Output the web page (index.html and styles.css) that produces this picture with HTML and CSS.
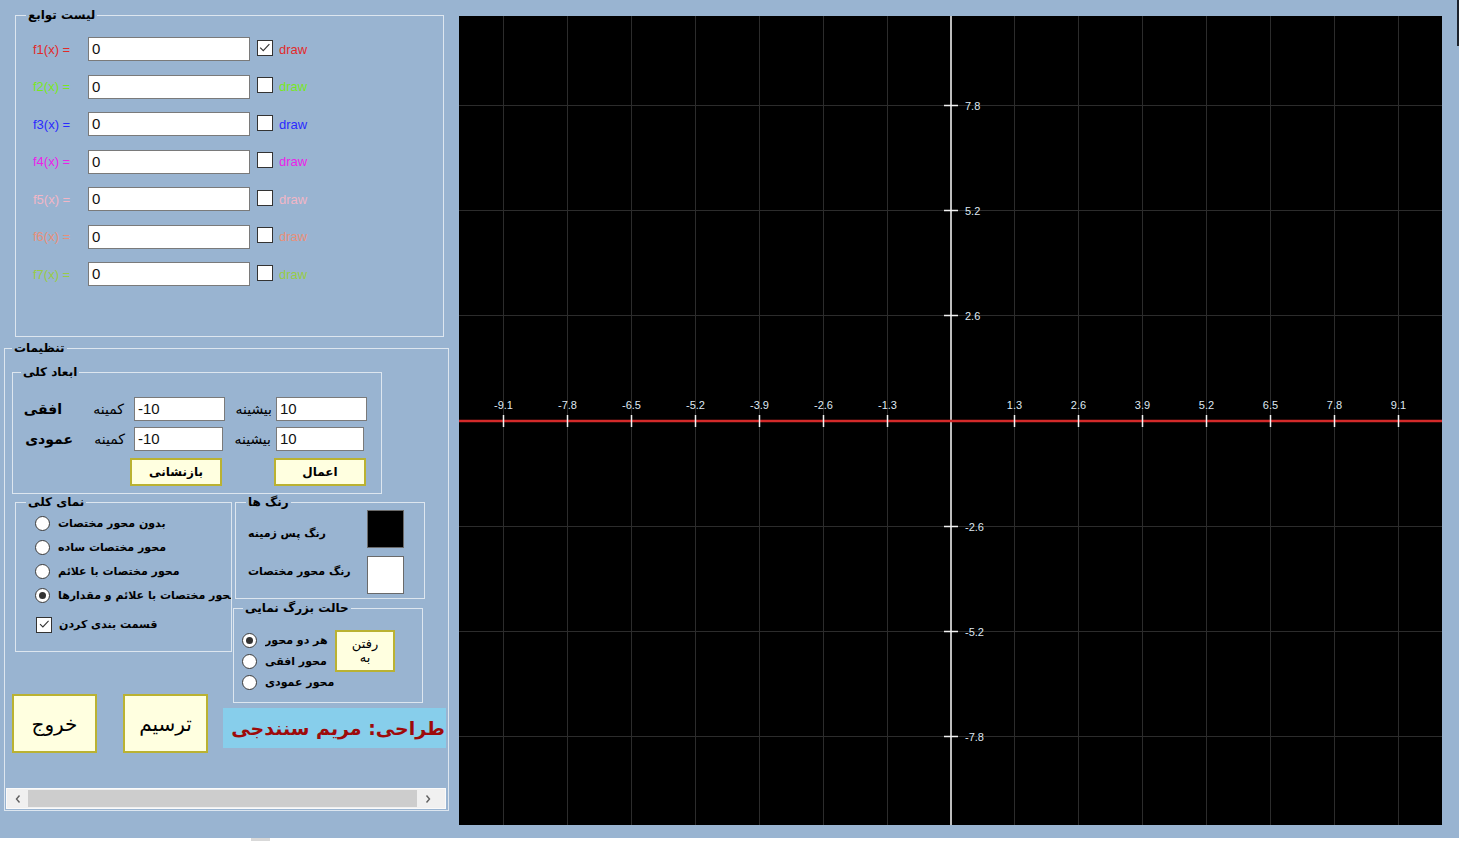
FILE: index.html
```html
<!DOCTYPE html>
<html lang="fa">
<head>
<meta charset="utf-8">
<title>رسم توابع</title>
<link rel="stylesheet" href="styles.css">
</head>
<body>
<div class="app">
  <div class="left">
    <div class="group g-funcs">
      <span class="gtitle">لیست توابع</span>
      <div class="funcs">
        <div class="frow c1"><span class="flabel">f1(x) =</span><span class="tbox">0</span><span class="cb"><svg viewBox="0 0 16 16" width="14" height="14"><polyline points="2.5,7.5 6,11 13,3.5" fill="none" stroke="#333" stroke-width="1.3"/></svg></span><span class="draw">draw</span></div>
        <div class="frow c2"><span class="flabel">f2(x) =</span><span class="tbox">0</span><span class="cb"></span><span class="draw">draw</span></div>
        <div class="frow c3"><span class="flabel">f3(x) =</span><span class="tbox">0</span><span class="cb"></span><span class="draw">draw</span></div>
        <div class="frow c4"><span class="flabel">f4(x) =</span><span class="tbox">0</span><span class="cb"></span><span class="draw">draw</span></div>
        <div class="frow c5"><span class="flabel">f5(x) =</span><span class="tbox">0</span><span class="cb"></span><span class="draw">draw</span></div>
        <div class="frow c6"><span class="flabel">f6(x) =</span><span class="tbox">0</span><span class="cb"></span><span class="draw">draw</span></div>
        <div class="frow c7"><span class="flabel">f7(x) =</span><span class="tbox">0</span><span class="cb"></span><span class="draw">draw</span></div>
      </div>
    </div>

    <div class="group g-settings">
      <span class="gtitle t-settings">تنظیمات</span>

      <div class="group g-dims">
        <span class="gtitle t-dims">ابعاد کلی</span>
        <div class="drow r1">
          <span class="dl big w1">افقی</span>
          <span class="dl w2">کمینه</span>
          <span class="tbox dbox wa">-10</span>
          <span class="dl w4">بیشینه</span>
          <span class="tbox dbox wa">10</span>
        </div>
        <div class="drow r2">
          <span class="dl big w1b">عمودی</span>
          <span class="dl w2b">کمینه</span>
          <span class="tbox dbox wb">-10</span>
          <span class="dl w4b">بیشینه</span>
          <span class="tbox dbox wc">10</span>
        </div>
        <div class="dbtns">
          <span class="btn small">بازنشانی</span>
          <span class="btn small">اعمال</span>
        </div>
      </div>

      <div class="mid">
        <div class="col-l">
          <div class="group g-view">
            <span class="gtitle t-view">نمای کلی</span>
            <div class="vrow"><span class="radio"></span><span class="rtext">بدون محور مختصات</span></div>
            <div class="vrow"><span class="radio"></span><span class="rtext">محور مختصات ساده</span></div>
            <div class="vrow"><span class="radio"></span><span class="rtext">محور مختصات با علائم</span></div>
            <div class="vrow"><span class="radio on"></span><span class="rtext">محور مختصات با علائم و مقدارها</span></div>
            <div class="vrow crow"><span class="cb cb-sm"><svg viewBox="0 0 16 16" width="13" height="13"><polyline points="2.5,7.5 6,11 13,3.5" fill="none" stroke="#333" stroke-width="1.3"/></svg></span><span class="rtext">قسمت بندی کردن</span></div>
          </div>
          <div class="bigbtns">
            <span class="btn big">خروج</span>
            <span class="btn big">ترسیم</span>
          </div>
        </div>
        <div class="col-r">
          <div class="group g-colors">
            <span class="gtitle t-colors">رنگ ها</span>
            <span class="clabel l1">رنگ پس زمینه</span><span class="swatch black"></span>
            <span class="clabel l2">رنگ محور مختصات</span><span class="swatch white"></span>
          </div>
          <div class="group g-zoom">
            <span class="gtitle t-zoom">حالت بزرگ نمایی</span>
            <div class="zrow"><span class="radio on"></span><span class="rtext">هر دو محور</span></div>
            <span class="btn go">رفتن<br>به</span>
            <div class="zrow"><span class="radio"></span><span class="rtext">محور افقی</span></div>
            <div class="zrow"><span class="radio"></span><span class="rtext">محور عمودی</span></div>
          </div>
          <div class="credit">طراحی: مریم سنندجی</div>
        </div>
      </div>

      <div class="hscroll">
        <span class="arrow"><svg width="8" height="10" viewBox="0 0 8 10"><polyline points="5.5,1.5 2.5,5 5.5,8.5" fill="none" stroke="#606060" stroke-width="1.4"/></svg></span>
        <span class="thumb"></span>
        <span class="arrow"><svg width="8" height="10" viewBox="0 0 8 10"><polyline points="2.5,1.5 5.5,5 2.5,8.5" fill="none" stroke="#606060" stroke-width="1.4"/></svg></span>
      </div>
    </div>
  </div>

  <div class="graph">
    <svg width="983" height="809" viewBox="0 0 983 809">
      <rect width="983" height="809" fill="#000"/>
      <g stroke="#2c2c2c" stroke-width="1">
        <line x1="44.5" y1="0" x2="44.5" y2="809"/>
        <line x1="108.5" y1="0" x2="108.5" y2="809"/>
        <line x1="172.5" y1="0" x2="172.5" y2="809"/>
        <line x1="236.5" y1="0" x2="236.5" y2="809"/>
        <line x1="300.5" y1="0" x2="300.5" y2="809"/>
        <line x1="364.5" y1="0" x2="364.5" y2="809"/>
        <line x1="428.5" y1="0" x2="428.5" y2="809"/>
        <line x1="555.5" y1="0" x2="555.5" y2="809"/>
        <line x1="619.5" y1="0" x2="619.5" y2="809"/>
        <line x1="683.5" y1="0" x2="683.5" y2="809"/>
        <line x1="747.5" y1="0" x2="747.5" y2="809"/>
        <line x1="811.5" y1="0" x2="811.5" y2="809"/>
        <line x1="875.5" y1="0" x2="875.5" y2="809"/>
        <line x1="939.5" y1="0" x2="939.5" y2="809"/>
        <line x1="0" y1="89.5" x2="983" y2="89.5"/>
        <line x1="0" y1="194.5" x2="983" y2="194.5"/>
        <line x1="0" y1="299.5" x2="983" y2="299.5"/>
        <line x1="0" y1="510.5" x2="983" y2="510.5"/>
        <line x1="0" y1="615.5" x2="983" y2="615.5"/>
        <line x1="0" y1="720.5" x2="983" y2="720.5"/>
      </g>
      <line x1="492" y1="0" x2="492" y2="809" stroke="#bdbdbd" stroke-width="2"/>
      <line x1="0" y1="405" x2="983" y2="405" stroke="#d42a2a" stroke-width="2.6"/>
      <g stroke="#f2f2f2" stroke-width="1.5">
        <line x1="44.5" y1="399" x2="44.5" y2="411"/>
        <line x1="108.5" y1="399" x2="108.5" y2="411"/>
        <line x1="172.5" y1="399" x2="172.5" y2="411"/>
        <line x1="236.5" y1="399" x2="236.5" y2="411"/>
        <line x1="300.5" y1="399" x2="300.5" y2="411"/>
        <line x1="364.5" y1="399" x2="364.5" y2="411"/>
        <line x1="428.5" y1="399" x2="428.5" y2="411"/>
        <line x1="555.5" y1="399" x2="555.5" y2="411"/>
        <line x1="619.5" y1="399" x2="619.5" y2="411"/>
        <line x1="683.5" y1="399" x2="683.5" y2="411"/>
        <line x1="747.5" y1="399" x2="747.5" y2="411"/>
        <line x1="811.5" y1="399" x2="811.5" y2="411"/>
        <line x1="875.5" y1="399" x2="875.5" y2="411"/>
        <line x1="939.5" y1="399" x2="939.5" y2="411"/>
        <line x1="485" y1="89.5" x2="499" y2="89.5"/>
        <line x1="485" y1="194.5" x2="499" y2="194.5"/>
        <line x1="485" y1="299.5" x2="499" y2="299.5"/>
        <line x1="485" y1="510.5" x2="499" y2="510.5"/>
        <line x1="485" y1="615.5" x2="499" y2="615.5"/>
        <line x1="485" y1="720.5" x2="499" y2="720.5"/>
      </g>
      <g class="axlabels" text-anchor="middle">
        <text x="44.5" y="393">-9.1</text>
        <text x="108.5" y="393">-7.8</text>
        <text x="172.5" y="393">-6.5</text>
        <text x="236.5" y="393">-5.2</text>
        <text x="300.5" y="393">-3.9</text>
        <text x="364.5" y="393">-2.6</text>
        <text x="428.5" y="393">-1.3</text>
        <text x="555.5" y="393">1.3</text>
        <text x="619.5" y="393">2.6</text>
        <text x="683.5" y="393">3.9</text>
        <text x="747.5" y="393">5.2</text>
        <text x="811.5" y="393">6.5</text>
        <text x="875.5" y="393">7.8</text>
        <text x="939.5" y="393">9.1</text>
      </g>
      <g class="axlabels">
        <text x="506" y="93.5">7.8</text>
        <text x="506" y="198.5">5.2</text>
        <text x="506" y="303.5">2.6</text>
        <text x="506" y="514.5">-2.6</text>
        <text x="506" y="619.5">-5.2</text>
        <text x="506" y="724.5">-7.8</text>
      </g>
    </svg>
  </div>
  <div class="edge"></div>
</div>
<div class="bottom-strip"><span class="blk"></span></div>
</body>
</html>
```

FILE: styles.css
```css
* { box-sizing: border-box; }
html, body { margin: 0; padding: 0; background: #ffffff; }
body { font-family: "Liberation Sans", Arial, sans-serif; color: #000; }

.app {
  width: 1459px;
  height: 838px;
  background: #99b4d1;
  display: flex;
  align-items: flex-start;
  overflow: hidden;
}

.left {
  width: 459px;
  flex: 0 0 459px;
  padding-top: 15px;
}

.group {
  position: relative;
  border: 1px solid #dde6ef;
}
.gtitle {
  position: absolute;
  top: -8px;
  height: 14px;
  line-height: 14px;
  padding: 0 2px;
  background: #99b4d1;
  font-family: "DejaVu Sans", sans-serif;
  font-weight: bold;
  font-size: 12px;
  white-space: nowrap;
  direction: rtl;
}

/* function list */
.g-funcs {
  margin-left: 15px;
  width: 429px;
  height: 322px;
  padding-top: 21px;
}
.g-funcs .gtitle { left: 10px; }
.funcs {
  display: grid;
  row-gap: 13.5px;
  padding-left: 17px;
}
.frow {
  display: flex;
  align-items: center;
  height: 24px;
  font-size: 13px;
}
.flabel { width: 55px; white-space: nowrap; }
.tbox {
  display: block;
  width: 162px;
  height: 24px;
  border: 1px solid #7a7a7a;
  background: #fff;
  font-family: "Liberation Sans", Arial, sans-serif;
  font-size: 15px;
  line-height: 22px;
  padding-left: 3px;
  color: #111;
}
.cb {
  width: 16px;
  height: 16px;
  margin-left: 7px;
  margin-top: -3px;
  border: 1px solid #333;
  background: #fff;
  display: flex;
  align-items: center;
  justify-content: center;
}
.draw { margin-left: 6px; }
.c1 { color: #e22a2a; }
.c2 { color: #78e81e; }
.c3 { color: #2a2aff; }
.c4 { color: #ea22ea; }
.c5 { color: #f2b6c6; }
.c6 { color: #e8907a; }
.c7 { color: #98cc46; }

/* settings */
.g-settings {
  margin-top: 11px;
  margin-left: 4px;
  width: 445px;
  height: 463px;
}
.t-settings { left: 7px; }

.g-dims {
  margin: 23px 0 0 7px;
  width: 370px;
  height: 122px;
  padding-top: 24px;
  font-family: "DejaVu Sans", sans-serif;
}
.t-dims { left: 8px; }
.drow {
  display: flex;
  align-items: center;
  height: 24px;
}
.r2 { margin-top: 6px; }
.dl {
  display: block;
  text-align: right;
  direction: rtl;
  font-size: 14px;
  white-space: nowrap;
}
.dl.big { font-weight: bold; font-size: 14px; }
.w1 { width: 53px; padding-right: 4px; }
.w2 { width: 68px; padding-right: 10px; }
.w4 { width: 51px; padding-right: 4px; }
.w1b { width: 64px; padding-right: 4px; }
.w2b { width: 57px; padding-right: 9px; }
.w4b { width: 53px; padding-right: 5px; }
.dbox { width: 91px; }
.dbox.wb { width: 89px; }
.dbox.wc { width: 88px; }
.dbtns {
  display: flex;
  gap: 52px;
  margin-top: 7px;
  padding-left: 117px;
}

.btn {
  display: flex;
  align-items: center;
  justify-content: center;
  background: #ffffe0;
  border: 2px solid #bab232;
  font-family: "DejaVu Sans", sans-serif;
  direction: rtl;
  text-align: center;
  white-space: nowrap;
}
.btn.small { width: 92px; height: 28px; font-size: 12px; font-weight: bold; }
.btn.big { width: 85px; height: 59px; font-size: 20px; }

.mid {
  display: flex;
  align-items: flex-start;
  margin-top: 8px;
}
.col-l { width: 226px; flex: 0 0 226px; }
.col-r { display: flex; flex-direction: column; }

.g-view {
  margin-left: 10px;
  width: 217px;
  height: 150px;
  padding-top: 8px;
  padding-left: 19px;
}
.t-view { left: 10px; }
.vrow {
  display: flex;
  align-items: center;
  height: 24px;
}
.rtext {
  font-family: "DejaVu Sans", sans-serif;
  font-weight: bold;
  font-size: 11px;
  white-space: nowrap;
  overflow: hidden;
  margin-left: 8px;
}
.vrow .rtext { max-width: 174px; }
.crow { margin-top: 5.5px; }
.cb.cb-sm { margin-left: 1px; margin-top: 0; width: 16px; height: 16px; }
.crow .rtext { margin-left: 7px; }

.radio {
  width: 15px;
  height: 15px;
  flex: 0 0 15px;
  border: 1px solid #3a3a3a;
  border-radius: 50%;
  background: #fff;
  display: flex;
  align-items: center;
  justify-content: center;
}
.radio.on::after {
  content: "";
  width: 7px;
  height: 7px;
  border-radius: 50%;
  background: #333;
}

.bigbtns {
  display: flex;
  gap: 26px;
  margin-top: 42px;
  margin-left: 7px;
}

.g-colors {
  margin-left: 4px;
  width: 190px;
  height: 97px;
  display: grid;
  grid-template-columns: 1fr 37px;
  grid-auto-rows: 38px;
  row-gap: 8px;
  padding: 7px 20px 0 12px;
}
.t-colors { left: 10px; }
.clabel {
  align-self: center;
  font-family: "DejaVu Sans", sans-serif;
  font-weight: bold;
  font-size: 11px;
  white-space: nowrap;
  direction: rtl;
  text-align: left;
}
.clabel.l1 { margin-top: 8px; }
.clabel.l2 { margin-bottom: 8px; }
.swatch { border: 1px solid #6a6a6a; }
.swatch.black { background: #000; }
.swatch.white { background: #fff; }

.g-zoom {
  margin-top: 9px;
  margin-left: 2px;
  width: 190px;
  height: 95px;
  display: grid;
  grid-template-columns: 93px 60px;
  grid-auto-rows: 21px;
  padding-top: 21px;
  padding-left: 8px;
}
.t-zoom { left: 9px; }
.zrow {
  grid-column: 1;
  display: flex;
  align-items: center;
}
.btn.go {
  grid-column: 2;
  grid-row: 1 / 3;
  height: 42px;
  width: 60px;
  font-size: 13px;
  line-height: 14px;
  white-space: normal;
}

.credit {
  margin-top: 5px;
  margin-left: -8px;
  width: 223px;
  height: 40px;
  padding-right: 1px;
  background: #87ceeb;
  color: #9e0a0a;
  font-family: "DejaVu Sans", sans-serif;
  font-weight: bold;
  font-size: 19px;
  line-height: 40px;
  direction: rtl;
  text-align: right;
  white-space: nowrap;
  overflow: hidden;
}

.hscroll {
  margin-top: 35px;
  margin-left: 1px;
  width: 440px;
  height: 21px;
  display: flex;
  background: #f0f0f0;
  border: 1px solid #fafafa;
}
.arrow {
  width: 21px;
  display: flex;
  align-items: center;
  justify-content: center;
}
.thumb {
  width: 389px;
  margin: 1px 0;
  background: #cdcdcd;
}

.graph {
  margin-top: 16px;
  width: 983px;
  height: 809px;
  flex: 0 0 983px;
  line-height: 0;
}
.graph svg { display: block; }
.axlabels text {
  font-family: "Liberation Sans", Arial, sans-serif;
  font-size: 11px;
  fill: #dfe8f2;
}

.edge {
  margin-left: auto;
  width: 2px;
  height: 46px;
  background: #1c222c;
}

.bottom-strip {
  height: 3px;
  display: flex;
  padding-left: 251px;
}
.blk { width: 19px; background: #d9d9d9; }
```
